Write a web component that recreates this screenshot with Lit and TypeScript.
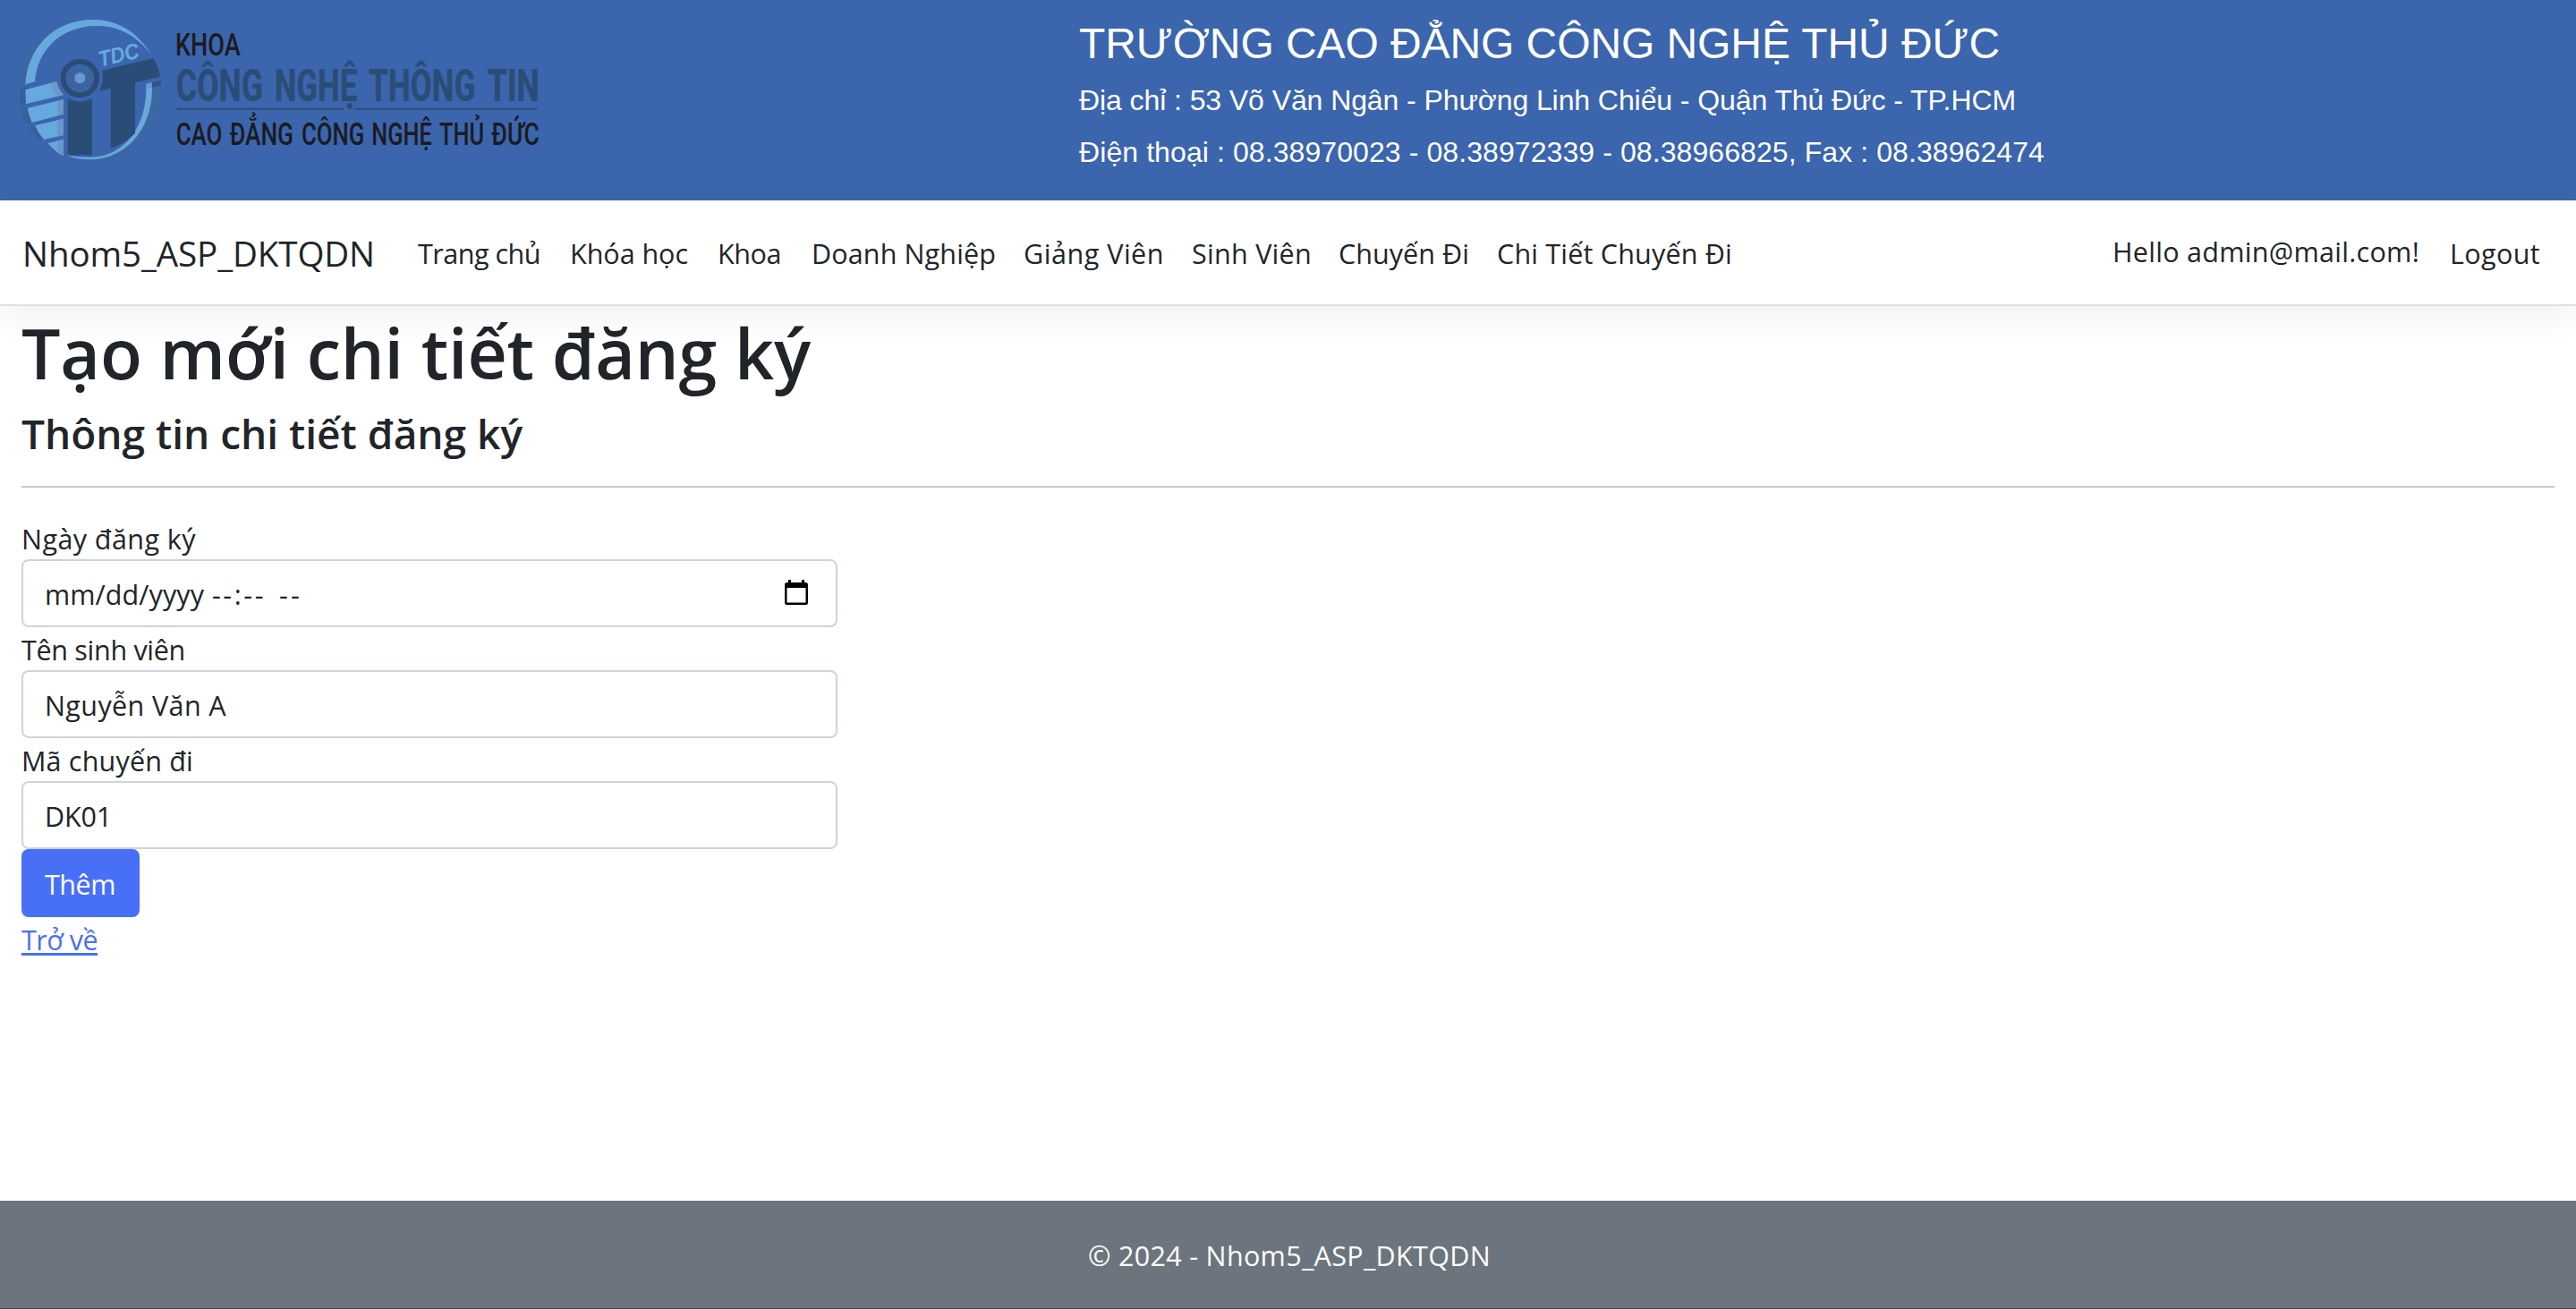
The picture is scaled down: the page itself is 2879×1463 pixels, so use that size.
import { LitElement, html, css, svg } from "lit";
import { customElement, property } from "lit/decorators.js";

/** Text run whose tracking is adjusted so that it fills a given width. */
@customElement("fit-text")
class FitText extends LitElement {
  @property({ type: Number }) w = 0;
  static styles = css`
    :host { display: inline-block; white-space: pre; }
  `;
  render() {
    return html`<slot></slot>`;
  }
  firstUpdated() {
    this.fit();
    document.fonts.ready.then(() => this.fit());
  }
  fit() {
    const text = this.textContent ?? "";
    this.style.letterSpacing = "0px";
    const natural = this.getBoundingClientRect().width;
    this.style.letterSpacing = (this.w - natural) / text.length + "px";
  }
}

const word = (cls: string, x: number, y: number, len: number, t: string) =>
  svg`<text class=${cls} x=${x} y=${y} textLength=${len} lengthAdjust="spacingAndGlyphs">${t}</text>`;

@customElement("app-root")
class AppRoot extends LitElement {
  static styles = css`
    :host { display: block; }
    * { box-sizing: border-box; }
    .page {
      width: 100%; height: 1463px; display: flex; flex-direction: column;
      background: #fff; color: #212529; overflow: hidden;
      font-family: "Open Sans", "Noto Sans", sans-serif; font-size: 30.5px; line-height: 48px;
    }
    .banner { height: 224px; flex: none; background: #3b65ad; display: flex; color: #fff; font-family: "Liberation Sans", Arial, sans-serif; }
    .logo { width: 1206px; height: 224px; flex: none; display: block; }
    .thin { font: 500 105px Roboto, sans-serif; fill: #1b1b1f; }
    .bold { font: 800 152px Roboto, sans-serif; fill: #2a4d77; }
    .tdc { font: italic 700 74px "Liberation Sans", sans-serif; fill: #67a9df; }
    .school { display: flex; flex-direction: column; }
    .school-name { font-size: 48px; line-height: 58px; padding-top: 20px; }
    .school-line { font-size: 32px; line-height: 48px; padding-top: 10px; }
    .nav {
      height: 118px; flex: none; display: flex; align-items: center; padding: 0 40px 0 25px;
      border-bottom: 2px solid #dee2e6; box-shadow: 0 16px 32px rgba(0,0,0,.05); background: #fff;
    }
    .brand { font-size: 38.5px; line-height: 60px; width: 442px; padding-top: 1px; }
    .links { display: flex; flex: 1; padding-top: 2px; }
    .user { display: flex; gap: 34px; }
    .logout { padding-top: 2px; }
    .main { flex: 1; padding: 0 24px; }
    .title { margin: 0; font-size: 77px; line-height: 96px; font-weight: 600; padding-top: 5px; height: 109px; }
    .sub { margin: 0; font-size: 46px; line-height: 58px; font-weight: 600; height: 92px; padding-top: 4px; }
    .rule { height: 2px; background: #c8c9ca; margin-bottom: 32px; }
    .form { width: 912px; display: flex; flex-direction: column; align-items: flex-start; }
    .label { height: 48px; padding-top: 1px; }
    .field {
      width: 100%; height: 76px; border: 2px solid #ced4da; border-radius: 8px; background: #fff;
      display: flex; align-items: center; justify-content: space-between; padding: 0 30px 0 24px;
    }
    .value { padding-top: 1px; }
    .date { display: flex; gap: 9px; }
    .meridiem { padding-left: 6px; }
    .cal { width: 28px; height: 30px; }
    .button {
      height: 76px; width: 132px; border: 0; border-radius: 8px; background: #4870f6; color: #fff;
      font: inherit; padding: 1px 1px 0 0; text-align: center;
    }
    .back { color: #4870f6; padding-top: 1px; }
    .back-text { text-decoration: underline; text-decoration-thickness: 3px; text-underline-offset: 3px; text-decoration-skip-ink: none; }
    .footer {
      height: 121px; flex: none; background: #6c757d; border-bottom: 1px solid #3c444c; color: #fff;
      display: flex; align-items: center; justify-content: center; padding: 1px 0 0 3px;
    }
  `;

  links: [string, number, number][] = [
    ["Trang chủ", 137, 33], ["Khóa học", 132, 33], ["Khoa", 71, 34], ["Doanh Nghiệp", 206, 31],
    ["Giảng Viên", 157, 31], ["Sinh Viên", 134, 30], ["Chuyến Đi", 146, 31], ["Chi Tiết Chuyến Đi", 263, 0],
  ];

  render() {
    return html`<div class="page">
      <header class="banner">
        <svg class="logo" viewBox="0 0 3618 672">
          <path fill="#3c699f" opacity=".85" d="M64 290 A238 238 0 0 1 320 63 L320 90 A205 222 0 0 0 110 270Z" />
          <path fill="#3c699f" d="M540 290 A238 238 0 0 1 300 538 L300 520 A205 222 0 0 0 508 300Z" />
          <path fill="#33619a" d="M66 300 L92 292 L92 345 L68 352Z M72 366 L94 360 Q98 385 108 410 L88 414 Q77 392 72 366Z M100 428 L118 422 Q130 448 148 468 L134 472 Q114 452 100 428Z" />
          <path fill="#67a9df" d="M85 283 C92 160 180 66 312 66 C405 66 470 118 507 184 C455 115 395 87 325 87 C200 88 125 170 117 274Z" />
          <path fill="#67a9df" d="M85 301 L190 273 Q195 300 213 318 L87 349Z M92 363 L213 333 V383 L107 411Q98 390 92 363Z M117 421 L213 398 V453 L147 468 Q130 448 117 421Z M160 480 L213 467 V523 Q183 508 160 480Z" />
          <path fill="#6a97c8" d="M170 279 L190 273 Q195 300 213 318 L194 323 Q175 305 170 279Z M193 338 L213 333 V383 L193 388Z M193 403 L213 398 V453 L193 458Z M193 472 L213 467 V523 L193 512Z" />
          <path fill="#67a9df" d="M490 281 L509 277 C519 420 430 535 302 535 Q260 535 225 522 Q270 528 310 527 C420 522 495 420 490 281Z" />
          <circle cx="268" cy="262" r="56" fill="none" stroke="#2a4d77" stroke-width="18" />
          <circle cx="268" cy="262" r="33" fill="none" stroke="#3a659c" stroke-width="16" />
          <circle cx="268" cy="262" r="18" fill="#6a97c8" />
          <path fill="#2a4d77" d="M227 331 Q268 350 309 331 V520 H240 L227 516Z M343 236 L515 195 Q532 225 537 257 L453 277 V447 Q420 480 371 499 V296 L333 305 Q350 275 343 236Z" />
          <path fill="#2d5685" d="M509 277 L540 269 L540 286 L509 293Z" />
          <path fill="#6a97c8" d="M490 281 L509 277 V293 L491 297Z" />
          <text class="tdc" textLength="138" lengthAdjust="spacingAndGlyphs" transform="translate(336 224) rotate(-13)">TDC</text>
          ${word("thin", 588, 185, 218, "KHOA")}
          ${word("bold", 590, 339, 292, "CÔNG")}
          ${word("bold", 920, 339, 278, "NGHỆ")}
          ${word("bold", 1236, 339, 358, "THÔNG")}
          ${word("bold", 1634, 339, 174, "TIN")}
          <path stroke="#2a4d77" stroke-width="6" d="M593 365H1152M1188 365H1801" />
          ${word("thin", 590, 485, 155, "CAO")}
          ${word("thin", 770, 485, 214, "ĐẲNG")}
          ${word("thin", 1011, 485, 211, "CÔNG")}
          ${word("thin", 1246, 485, 202, "NGHỆ")}
          ${word("thin", 1473, 485, 150, "THỦ")}
          ${word("thin", 1648, 485, 160, "ĐỨC")}
        </svg>
        <div class="school">
          <div class="school-name"><fit-text w="1029">TRƯỜNG CAO ĐẲNG CÔNG NGHỆ THỦ ĐỨC</fit-text></div>
          <div class="school-line"><fit-text w="1047">Địa chỉ : 53 Võ Văn Ngân - Phường Linh Chiểu - Quận Thủ Đức - TP.HCM</fit-text></div>
          <div class="school-line"><fit-text w="1079">Điện thoại : 08.38970023 - 08.38972339 - 08.38966825, Fax : 08.38962474</fit-text></div>
        </div>
      </header>
      <nav class="nav">
        <div class="brand"><fit-text w="394">Nhom5_ASP_DKTQDN</fit-text></div>
        <div class="links">
          ${this.links.map(([t, w, gap]) => html`<span class="link" style="margin-right:${gap}px"><fit-text .w=${w}>${t}</fit-text></span>`)}
        </div>
        <div class="user">
          <span class="hello"><fit-text w="343">Hello admin@mail.com!</fit-text></span>
          <span class="logout"><fit-text w="101">Logout</fit-text></span>
        </div>
      </nav>
      <main class="main">
        <h1 class="title"><fit-text w="882">Tạo mới chi tiết đăng ký</fit-text></h1>
        <h4 class="sub"><fit-text w="560">Thông tin chi tiết đăng ký</fit-text></h4>
        <div class="rule"></div>
        <div class="form">
          <div class="label"><fit-text w="195">Ngày đăng ký</fit-text></div>
          <div class="field">
            <span class="value date"><fit-text w="178">mm/dd/yyyy</fit-text><fit-text w="60">--:--</fit-text><fit-text class="meridiem" w="32">--</fit-text></span>
            <svg class="cal" viewBox="0 0 28 30"><path fill="#000" fill-rule="evenodd" d="M5 0h3v3h12V0h3v3h1.500a2.500 2.500 0 0 1 2.500 2.500v20a2.500 2.500 0 0 1-2.500 2.500H3.500A2.500 2.500 0 0 1 1 25.500v-20A2.500 2.500 0 0 1 3.500 3H5zM3.500 9v16.500h21V9z" /></svg>
          </div>
          <div class="label"><fit-text w="183">Tên sinh viên</fit-text></div>
          <div class="field"><span class="value"><fit-text w="203">Nguyễn Văn A</fit-text></span></div>
          <div class="label"><fit-text w="192">Mã chuyến đi</fit-text></div>
          <div class="field"><span class="value"><fit-text w="75">DK01</fit-text></span></div>
          <button class="button"><fit-text w="79">Thêm</fit-text></button>
          <a class="back"><fit-text class="back-text" w="85">Trở về</fit-text></a>
        </div>
      </main>
      <footer class="footer"><fit-text w="450">© 2024 - Nhom5_ASP_DKTQDN</fit-text></footer>
    </div>`;
  }
}
